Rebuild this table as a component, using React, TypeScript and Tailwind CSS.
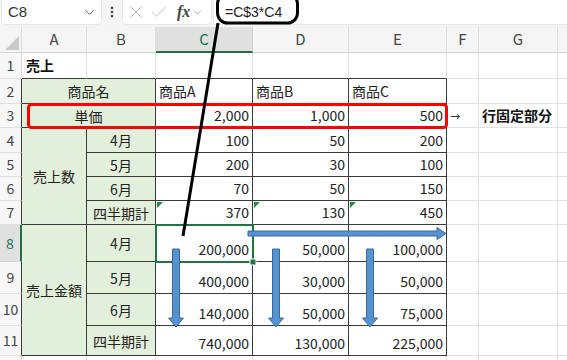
import { ChevronDown, X, Check, EllipsisVertical } from "lucide-react";
import React from "react";

const gR = "border-r border-r-[#e1e1e1]";
const gB = "border-b border-b-[#e1e1e1]";
const dR = "border-r border-r-[#3a3a3a]";
const dB = "border-b border-b-[#3a3a3a]";

const num = "flex justify-end items-end pr-[3px] pb-[2px] leading-[20px] text-[14px] text-[#222]";
const ctr = "flex justify-center items-center leading-[20px] text-[14px] text-[#222]";
const green = "bg-[#e2efda]";

function ColHdr({ t, sel, last }: { t: string; sel?: boolean; last?: boolean }) {
  return (
    <div
      className={
        sel
          ? "flex items-center justify-center bg-[#e0e0e0] text-[#217346] text-[15px] border-b-2 border-b-[#217346] border-r border-r-[#d0d0d0]"
          : last
          ? "flex items-center justify-center bg-[#f5f5f5] text-[#444] text-[15px] border-b border-b-[#d4d4d4]"
          : "flex items-center justify-center bg-[#f5f5f5] text-[#444] text-[15px] border-b border-b-[#d4d4d4] border-r border-r-[#dcdcdc]"
      }
    >
      {t}
    </div>
  );
}

function RowHdr({ n, dark, sel }: { n: string; dark?: boolean; sel?: boolean }) {
  if (sel)
    return (
      <div className="flex items-center justify-center bg-[#e0e0e0] text-[#217346] text-[14px] border-b border-b-[#d4d4d4] border-r-2 border-r-[#217346]">
        {n}
      </div>
    );
  return (
    <div
      className={
        dark
          ? "flex items-center justify-center bg-[#f7f7f7] text-[#444] text-[14px] border-b border-b-[#dedede] border-r border-r-[#3a3a3a]"
          : "flex items-center justify-center bg-[#f7f7f7] text-[#444] text-[14px] border-b border-b-[#dedede] border-r border-r-[#dcdcdc]"
      }
    >
      {n}
    </div>
  );
}

function Blank() {
  return <div className={`${gR} ${gB}`} />;
}
function BlankLast() {
  return <div className={`${gB}`} />;
}

function DataRow({ n, b, vals, sel }: { n: string; b?: string; vals: string[]; sel?: boolean }) {
  return (
    <>
      <RowHdr n={n} dark sel={sel} />
      {b !== undefined && <div className={`${ctr} ${green} ${dR} ${dB}`}>{b}</div>}
      {vals.map((v, i) => (
        <div key={i} className={`${num} ${dR} ${dB}`}>
          {v}
        </div>
      ))}
      <Blank />
      <Blank />
      <BlankLast />
    </>
  );
}

export default function App() {
  return (
    <div className="relative w-[567px] h-[360px] overflow-hidden bg-white font-['Noto_Sans_CJK_JP','Noto_Sans',sans-serif]">
      {/* toolbar */}
      <div className="flex h-[27px] bg-[#f4f4f4] items-start">
        <div className="ml-[2px] w-[99px] h-[24px] bg-white rounded-b-[4px] shadow-[0_0_0_1px_#e6e6e6] flex items-center justify-between pl-[6px] pr-[4px]">
          <span className="text-[15px] text-[#333] font-['Liberation_Sans',sans-serif]">C8</span>
          <ChevronDown size={15} strokeWidth={1.5} color="#555" />
        </div>
        <div className="w-[22px] h-[24px] flex items-center justify-center">
          <EllipsisVertical size={14} strokeWidth={2.5} color="#444" />
        </div>
        <div className="w-[88px] h-[24px] bg-white rounded-b-[4px] shadow-[0_0_0_1px_#e6e6e6] flex items-center pl-[1px]">
          <X size={24} strokeWidth={0.9} color="#b5b5b5" />
          <Check size={20} strokeWidth={1.05} color="#b5b5b5" className="ml-[1px]" />
          <span className="flex items-center gap-[1px] ml-[8px]">
            <span className="italic font-bold text-[16px] text-[#444] font-['Liberation_Serif',serif] leading-none">fx</span>
            <ChevronDown size={13} strokeWidth={1.3} color="#888" />
          </span>
        </div>
        <div className="ml-[3px] flex-1 h-[24px] bg-white shadow-[0_0_0_1px_#e6e6e6] flex items-center pl-[11px]">
          <span className="text-[14px] text-[#222] font-['Liberation_Sans',sans-serif]">=C$3*C4</span>
        </div>
      </div>

      {/* sheet */}
      <div className="grid h-[333px] grid-cols-[22px_65px_69px_97px_96px_98px_32px_79px_1fr] grid-rows-[26px_26px_25px_24px_25px_24px_24px_24px_37px_32px_32px_30px_1fr]">
        {/* header row */}
        <div className="relative bg-[#f5f5f5] border-b border-b-[#d4d4d4] border-r border-r-[#dcdcdc]">
          <svg className="absolute right-[2px] bottom-[2px]" width="14" height="14" viewBox="0 0 14 14">
            <polygon points="14,0 14,14 0,14" fill="#c9c9c9" />
          </svg>
        </div>
        <ColHdr t="A" />
        <ColHdr t="B" />
        <ColHdr t="C" sel />
        <ColHdr t="D" />
        <ColHdr t="E" />
        <ColHdr t="F" />
        <ColHdr t="G" />
        <ColHdr t="" last />

        {/* row 1 */}
        <RowHdr n="1" />
        <div className={`flex items-center pl-[4px] text-[14px] font-bold text-[#111] ${gR} ${dB}`}>売上</div>
        <div className={`${gR} ${dB}`} />
        <div className={`${gR} ${dB}`} />
        <div className={`${gR} ${dB}`} />
        <div className={`${gR} ${dB}`} />
        <Blank />
        <Blank />
        <BlankLast />

        {/* row 2 */}
        <RowHdr n="2" dark />
        <div className={`col-span-2 ${ctr} ${green} ${dR} ${dB}`}>商品名</div>
        <div className={`flex items-end pb-[2px] pl-[3px] leading-[20px] text-[14px] text-[#222] ${dR} ${dB}`}>商品A</div>
        <div className={`flex items-end pb-[2px] pl-[3px] leading-[20px] text-[14px] text-[#222] ${dR} ${dB}`}>商品B</div>
        <div className={`flex items-end pb-[2px] pl-[3px] leading-[20px] text-[14px] text-[#222] ${dR} ${dB}`}>商品C</div>
        <Blank />
        <Blank />
        <BlankLast />

        {/* row 3 */}
        <RowHdr n="3" dark />
        <div className={`col-span-2 ${ctr} ${green} ${dR} ${dB}`}>単価</div>
        <div className={`${num} ${dR} ${dB}`}>2,000</div>
        <div className={`${num} ${dR} ${dB}`}>1,000</div>
        <div className={`${num} ${dR} ${dB}`}>500</div>
        <div className={`flex items-center pl-[3px] text-[12px] text-[#333] font-['DejaVu_Sans',sans-serif] ${gR} ${gB}`}>→</div>
        <div className={`flex items-center pl-[3px] text-[14px] font-bold text-[#111] whitespace-nowrap ${gR} ${gB}`}>行固定部分</div>
        <BlankLast />

        {/* rows 4-7 */}
        <RowHdr n="4" dark />
        <div className={`row-span-4 ${ctr} ${green} ${dR} ${dB}`}>売上数</div>
        <div className={`${ctr} ${green} ${dR} ${dB}`}>4月</div>
        <div className={`${num} ${dR} ${dB}`}>100</div>
        <div className={`${num} ${dR} ${dB}`}>50</div>
        <div className={`${num} ${dR} ${dB}`}>200</div>
        <Blank />
        <Blank />
        <BlankLast />
        <DataRow n="5" b="5月" vals={["200", "30", "100"]} />
        <DataRow n="6" b="6月" vals={["70", "50", "150"]} />
        <DataRow n="7" b="四半期計" vals={["370", "130", "450"]} />

        {/* rows 8-11 */}
        <RowHdr n="8" sel />
        <div className={`row-span-4 ${ctr} ${green} ${dR} ${dB}`}>売上金額</div>
        <div className={`${ctr} ${green} ${dR} ${dB}`}>4月</div>
        <div className={`${num} ${dR} ${dB}`}>200,000</div>
        <div className={`${num} ${dR} ${dB}`}>50,000</div>
        <div className={`${num} ${dR} ${dB}`}>100,000</div>
        <Blank />
        <Blank />
        <BlankLast />
        <DataRow n="9" b="5月" vals={["400,000", "30,000", "50,000"]} />
        <DataRow n="10" b="6月" vals={["140,000", "50,000", "75,000"]} />
        <DataRow n="11" b="四半期計" vals={["740,000", "130,000", "225,000"]} />

        {/* row 12 (partial) */}
        <div className="bg-[#f7f7f7] border-r border-r-[#dcdcdc]" />
        <div className={gR} />
        <div className={gR} />
        <div className={gR} />
        <div className={gR} />
        <div className={gR} />
        <div className={gR} />
        <div className={gR} />
        <div />
      </div>

      {/* overlays */}
      <svg className="absolute left-0 top-0 pointer-events-none" width="567" height="360" viewBox="0 0 567 360">
        {/* error indicators */}
        <polygon points="157,202 163,202 157,208" fill="#1f8a3a" />
        <polygon points="254,202 260,202 254,208" fill="#1f8a3a" />
        <polygon points="350,202 356,202 350,208" fill="#1f8a3a" />
        {/* selection */}
        <rect x="156" y="225" width="97" height="37" fill="none" stroke="#217346" strokeWidth="2" />
        <rect x="250" y="259" width="6" height="6" fill="#217346" stroke="#fff" strokeWidth="1" />
        {/* red box */}
        <rect x="28.5" y="104.5" width="418" height="23" rx="3" fill="none" stroke="#ff0000" strokeWidth="3" />
        {/* oval + leader line */}
        <rect x="217.5" y="-6" width="80" height="29" rx="10" fill="none" stroke="#000" strokeWidth="3" />
        <line x1="218" y1="23" x2="183" y2="236" stroke="#000" strokeWidth="3" />
        {/* blue arrows */}
        <polygon points="248,231 437,231 437,227.5 446,233.5 437,239.5 437,236 248,236" fill="#5592d0" stroke="#3b6a98" strokeWidth="1" />
        <polygon points="172.5,249 179.5,249 179.5,318 183.5,318 176,327 168.5,318 172.5,318" fill="#5592d0" stroke="#3b6a98" strokeWidth="1" />
        <polygon points="272.5,249 279.5,249 279.5,318 283.5,318 276,327 268.5,318 272.5,318" fill="#5592d0" stroke="#3b6a98" strokeWidth="1" />
        <polygon points="366.5,249 373.5,249 373.5,318 377.5,318 370,327 362.5,318 366.5,318" fill="#5592d0" stroke="#3b6a98" strokeWidth="1" />
      </svg>
    </div>
  );
}
